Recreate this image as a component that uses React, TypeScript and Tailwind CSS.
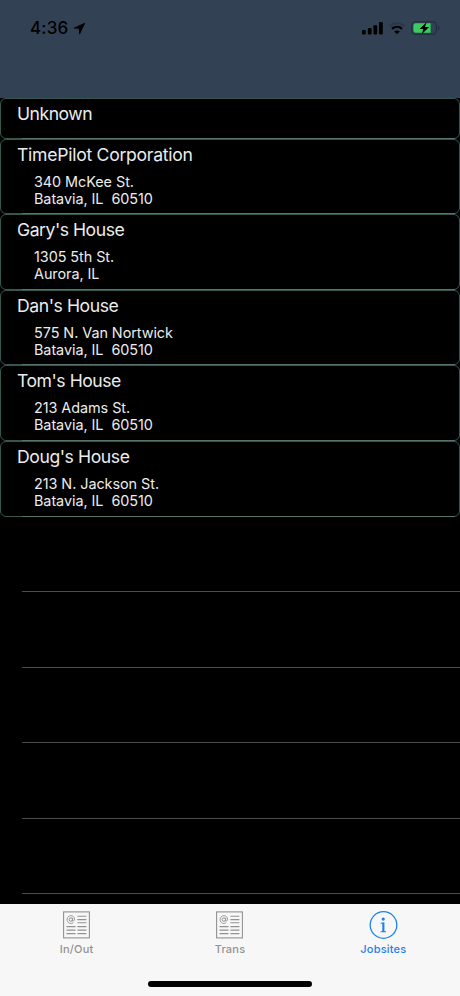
import React from "react";

type Site = { name: string; lines: string[]; height: string; tracking: string };

const sites: Site[] = [
  { name: "Unknown", lines: [], height: "h-[41px]", tracking: "tracking-[-0.5px]" },
  { name: "TimePilot Corporation", lines: ["340 McKee St.", "Batavia, IL  60510"], height: "h-[75px]", tracking: "tracking-[-0.27px]" },
  { name: "Gary's House", lines: ["1305 5th St.", "Aurora, IL"], height: "h-[76px]", tracking: "tracking-[-0.47px]" },
  { name: "Dan's House", lines: ["575 N. Van Nortwick", "Batavia, IL  60510"], height: "h-[75px]", tracking: "tracking-[-0.43px]" },
  { name: "Tom's House", lines: ["213 Adams St.", "Batavia, IL  60510"], height: "h-[76px]", tracking: "tracking-[-0.47px]" },
  { name: "Doug's House", lines: ["213 N. Jackson St.", "Batavia, IL  60510"], height: "h-[76px]", tracking: "tracking-[-0.42px]" },
];

const emptyRows = ["h-[75px]", "h-[76px]", "h-[75px]", "h-[76px]", "h-[75px]"];

function StatusBar() {
  return (
    <header className="flex h-[98px] shrink-0 items-start justify-between bg-[#334155] pl-[30px] pr-[20px] pt-[18px] text-black">
      <div className="flex h-5 items-center">
        <span className="w-[40px] whitespace-nowrap text-[17px] font-medium leading-5 tracking-[0.2px]">4:36</span>
        <svg className="ml-[3px]" width="13" height="13" viewBox="0 0 13 13">
          <path d="M11.4.9.9 5.7c-.5.3-.3.8.2.9l4.8.2.2 4.9c0 .6.6.7.9.2L12 1.5c.2-.4-.2-.8-.6-.6Z" fill="#000" />
        </svg>
      </div>
      <div className="flex h-5 items-center">
        <svg width="22" height="14" viewBox="0 0 22 14">
          <rect x="0" y="9" width="3.8" height="4.4" rx="1" />
          <rect x="5.8" y="7" width="3.8" height="6.4" rx="1" />
          <rect x="11.4" y="4.2" width="3.8" height="9.2" rx="1" />
          <rect x="17" y="1" width="3.8" height="12.4" rx="1" />
        </svg>
        <svg className="ml-[4px]" width="18" height="14" viewBox="0 0 18 14">
          <path d="M1.3 5.2C5.7 1.2 12.3 1.2 16.7 5.2" fill="none" stroke="#2a384a" strokeWidth="2" />
          <path d="M4 7.8c2.9-2.6 7.1-2.6 10 0" fill="none" stroke="#000" strokeWidth="2.4" />
          <path d="M9 13.2 6.2 10.4c1.6-1.3 4-1.3 5.6 0Z" />
        </svg>
        <svg className="ml-[5px]" width="29" height="14" viewBox="0 0 29 14">
          <rect x=".8" y=".8" width="24.6" height="12.4" rx="3.8" fill="none" stroke="#1f2b38" strokeWidth="1.1" />
          <path d="M27 4.8c1.8.8 1.8 3.6 0 4.4Z" fill="#1f2b38" />
          <path d="M4.6 2.2H19.6V11.8H4.6a2.2 2.2 0 0 1-2.2-2.2V4.4a2.2 2.2 0 0 1 2.2-2.2Z" fill="#3ccb5f" />
          <path d="M15.7 1 8.6 7.9h3.8l-1.7 5.3 7.4-7.1h-4.1Z" />
        </svg>
      </div>
    </header>
  );
}

function SiteRow({ site }: { site: Site }) {
  return (
    <li className={`relative shrink-0 rounded-[6px] border border-[#35574f] pl-4 ${site.height}`}>
      <h2 className={`pt-[4px] text-[17.6px] leading-[22px] ${site.tracking}`}>{site.name}</h2>
      <div className="ml-[17px] mt-[7px] whitespace-pre text-[14.4px] leading-[17.3px] tracking-[-0.05px]">
        {site.lines.map((line) => (
          <p key={line}>{line}</p>
        ))}
      </div>
      <span className="absolute -bottom-px left-[21px] right-[4px] h-px bg-[#56736d]" />
    </li>
  );
}

function NewsIcon() {
  return (
    <svg width="27" height="28" viewBox="0 0 27 28" fill="none" stroke="#929292">
      <rect x=".6" y=".9" width="25.8" height="26" strokeWidth="1.1" />
      <path d="M14.4 5.3H23.4M14.4 8.6H23.4M14.4 11.8H23.4M3.5 15.6H12.5M14.4 15.6H23.4M3.5 19.1H12.5M14.4 19.1H23.4M3.5 22.6H12.5M14.4 22.6H23.4" strokeWidth="1.1" />
      <circle cx="7.9" cy="8.6" r="1.7" />
      <path d="M9.8 6.8 9.3 9.4c-.2 1.4 2.3.9 2.3-1.2 0-2-1.6-3.5-3.7-3.5a3.9 3.9 0 1 0 2.4 7" strokeWidth=".9" />
    </svg>
  );
}

function InfoIcon() {
  return (
    <svg width="29" height="29" viewBox="0 0 29 29">
      <circle cx="14.5" cy="15" r="13.3" fill="none" stroke="#1f80ec" strokeWidth="1.3" />
      <circle cx="14.2" cy="9.1" r="1.6" fill="#1f80ec" />
      <path d="M11.6 12.7 15.4 12.2V21.1l1.7.5v.7h-5.6v-.7l1.8-.5v-7.3l-1.7-.4Z" fill="#1f80ec" />
    </svg>
  );
}

function Tab({ label, active, icon }: { label: string; active?: boolean; icon: React.ReactNode }) {
  return (
    <button className={`flex flex-1 flex-col items-center text-[11px] font-medium leading-[14px] tracking-[0.2px] ${active ? "text-[#1f80ec]" : "text-[#929292]"}`}>
      <span className="flex h-[29px] items-center">{icon}</span>
      <span className="mt-[3px]">{label}</span>
    </button>
  );
}

export default function App() {
  return (
    <div className="flex h-[996px] w-[460px] flex-col overflow-hidden bg-black font-['Inter','Liberation_Sans',sans-serif] text-[#ececec]">
      <StatusBar />
      <main className="flex h-[806px] shrink-0 flex-col">
        <ul className="flex flex-col">
          {sites.map((site) => (
            <SiteRow key={site.name} site={site} />
          ))}
        </ul>
        {emptyRows.map((height, i) => (
          <div key={i} className={`ml-[22px] shrink-0 border-b border-[#4b4b4b] ${height}`} />
        ))}
      </main>
      <nav className="flex h-[92px] shrink-0 flex-col items-center bg-[#f7f7f7]">
        <div className="flex w-full pt-[6px]">
          <Tab label="In/Out" icon={<NewsIcon />} />
          <Tab label="Trans" icon={<NewsIcon />} />
          <Tab label="Jobsites" active icon={<InfoIcon />} />
        </div>
        <div className="mt-[25px] h-[6px] w-[164px] rounded-full bg-black" />
      </nav>
    </div>
  );
}
